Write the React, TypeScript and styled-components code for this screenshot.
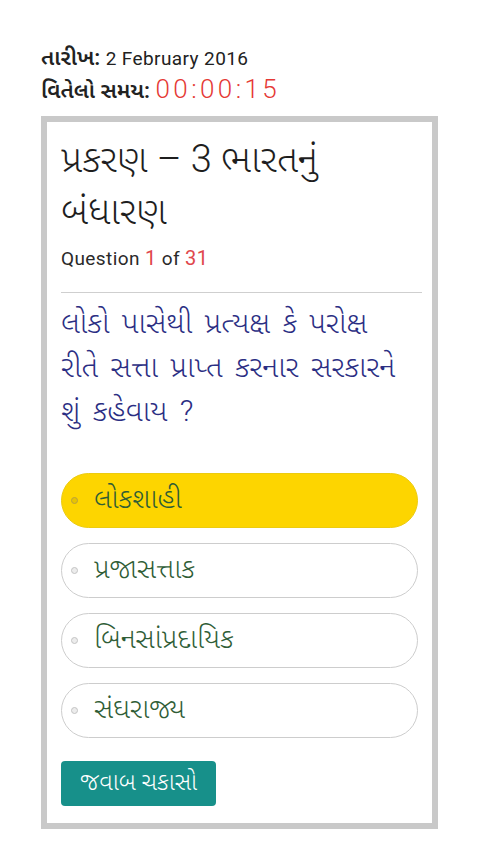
import styled, { createGlobalStyle } from "styled-components";

const GlobalStyle = createGlobalStyle`
  html, body {
    margin: 0;
    padding: 0;
    background: #ffffff;
  }
  body {
    font-family: Roboto, "Noto Sans Gujarati", "Noto Sans", sans-serif;
    color: #222;
  }
`;

const options = ["લોકશાહી", "પ્રજાસત્તાક", "બિનસાંપ્રદાયિક", "સંઘરાજ્ય"];

const App = () => {
  return (
    <>
      <GlobalStyle />
      <Page>
        <Meta>
          <MetaRow>
            <Label>તારીખ:</Label> <Plain>2 February 2016</Plain>
          </MetaRow>
          <MetaRow>
            <Label>વિતેલો સમય:</Label> <Timer>00:00:15</Timer>
          </MetaRow>
        </Meta>
        <Card>
          <Title>પ્રકરણ – 3 ભારતનું બંધારણ</Title>
          <Counter>
            Question <Red>1</Red> of <Red>31</Red>
          </Counter>
          <Divider />
          <QuestionText>
            લોકો પાસેથી પ્રત્યક્ષ કે પરોક્ષ રીતે સત્તા પ્રાપ્ત કરનાર સરકારને શું કહેવાય ?
          </QuestionText>
          <OptionList>
            {options.map((o, i) => (
              <Option key={o} $selected={i === 0}>
                <Dot $selected={i === 0} />
                {o}
              </Option>
            ))}
          </OptionList>
          <CheckButton>જવાબ ચકાસો</CheckButton>
        </Card>
      </Page>
    </>
  );
};

export default App;

const Page = styled.div`
  padding: 42px 42px 20px 41px;
`;

const Meta = styled.div`
  margin-bottom: 10px;
`;

const MetaRow = styled.div`
  font-size: 22px;
  line-height: 31px;
  color: #222;
  white-space: nowrap;
`;

const Label = styled.b`
  font-weight: 600;
`;

const Plain = styled.span`
  font-size: 19px;
  letter-spacing: 0.4px;
`;

const Timer = styled.span`
  color: #e53935;
  font-size: 26px;
  font-weight: 300;
  letter-spacing: 3.4px;
`;

const Card = styled.div`
  border: 6px solid #c9c9c9;
  padding: 11px 10px 17px 14px;
`;

const Title = styled.h1`
  margin: 0;
  font-size: 38px;
  font-weight: 300;
  line-height: 52px;
  color: #1e1e1e;
`;

const Counter = styled.div`
  font-size: 19px;
  letter-spacing: 0.4px;
  line-height: 30px;
  margin-top: 6px;
  color: #2a2a2a;
`;

const Red = styled.span`
  color: #e0474c;
  font-size: 20px;
`;

const Divider = styled.hr`
  border: 0;
  border-top: 1px solid #cfcfcf;
  margin: 18px 0 8px;
`;

const QuestionText = styled.p`
  margin: 0 0 40px;
  max-width: 354px;
  font-size: 30px;
  font-weight: 300;
  line-height: 44px;
  word-spacing: 5px;
  color: #2b2e83;
`;

const OptionList = styled.div`
  display: flex;
  flex-direction: column;
  gap: 15px;
  margin-right: 4px;
  margin-bottom: 23px;
`;

const Option = styled.div<{ $selected?: boolean }>`
  display: flex;
  align-items: center;
  height: 55px;
  box-sizing: border-box;
  border-radius: 28px;
  border: 1px solid ${(p) => (p.$selected ? "#eccb10" : "#cdcdcd")};
  background: ${(p) => (p.$selected ? "#fdd500" : "#ffffff")};
  padding-left: 9px;
  font-size: 28px;
  font-weight: 300;
  color: #2f5d36;
`;

const Dot = styled.span<{ $selected?: boolean }>`
  flex: none;
  width: 5px;
  height: 5px;
  border-radius: 50%;
  border: 1px solid ${(p) => (p.$selected ? "#b8a040" : "#c4c4c4")};
  background: ${(p) => (p.$selected ? "#e8c400" : "#ececec")};
  margin-right: 16px;
`;

const CheckButton = styled.button`
  display: block;
  background: #17908a;
  color: #ffffff;
  border: 0;
  border-radius: 4px;
  height: 45px;
  padding: 0 19px;
  font-family: inherit;
  font-size: 24px;
  font-weight: 300;
`;
